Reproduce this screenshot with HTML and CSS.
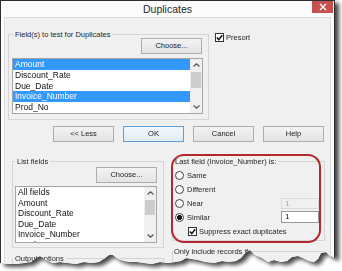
FILE: index.html
```html
<!DOCTYPE html>
<html lang="en">
<head>
    <meta charset="UTF-8">
    <title>Duplicates</title>
    <link rel="stylesheet" href="styles.css">
</head>
<body>
    <div class="shot">
        <div class="dialog">
            <div class="titlebar">
                <span></span>
                <div class="title">Duplicates</div>
                <div class="close">
                    <svg width="8" height="8" viewBox="0 0 8 8"><path d="M1 1L7 7M7 1L1 7" stroke="#fff" stroke-width="1.4"/></svg>
                </div>
            </div>

            <div class="client">
                <div class="row-top">
                    <fieldset class="group g-fields">
                        <legend>Field(s) to test for Duplicates</legend>
                        <div class="btn-line"><button class="btn">Choose...</button></div>
                        <div class="listbox lb-fields">
                            <ul class="items">
                                <li class="sel">Amount</li>
                                <li>Discount_Rate</li>
                                <li>Due_Date</li>
                                <li class="sel">Invoice_Number</li>
                                <li>Prod_No</li>
                            </ul>
                            <div class="sb">
                                <div class="sb-arrow"><svg width="7" height="4" viewBox="0 0 7 4"><path d="M0.5 3.5L3.5 0.8L6.5 3.5" fill="none" stroke="#555" stroke-width="1.2"/></svg></div>
                                <div class="sb-thumb"></div>
                                <div class="sb-track"></div>
                                <div class="sb-arrow"><svg width="7" height="4" viewBox="0 0 7 4"><path d="M0.5 0.5L3.5 3.2L6.5 0.5" fill="none" stroke="#555" stroke-width="1.2"/></svg></div>
                            </div>
                        </div>
                    </fieldset>

                    <div class="check presort">
                        <span class="box"><svg width="7" height="7" viewBox="0 0 7 7"><path d="M0.8 3.6L2.7 5.6L6.3 1.2" fill="none" stroke="#111" stroke-width="1.5"/></svg></span>
                        <span>Presort</span>
                    </div>
                </div>

                <div class="actions">
                    <button class="btn">&lt;&lt; Less</button>
                    <button class="btn default">OK</button>
                    <button class="btn">Cancel</button>
                    <button class="btn">Help</button>
                </div>

                <div class="row-bottom">
                    <div class="col col-left">
                        <fieldset class="group g-list">
                            <legend>List fields</legend>
                            <div class="btn-line"><button class="btn">Choose...</button></div>
                            <div class="listbox lb-list">
                                <ul class="items">
                                    <li>All fields</li>
                                    <li>Amount</li>
                                    <li>Discount_Rate</li>
                                    <li>Due_Date</li>
                                    <li>Invoice_Number</li>
                                    <li>Prod_No</li>
                                </ul>
                                <div class="sb">
                                    <div class="sb-arrow"><svg width="7" height="4" viewBox="0 0 7 4"><path d="M0.5 3.5L3.5 0.8L6.5 3.5" fill="none" stroke="#555" stroke-width="1.2"/></svg></div>
                                    <div class="sb-thumb"></div>
                                    <div class="sb-track"></div>
                                    <div class="sb-arrow"><svg width="7" height="4" viewBox="0 0 7 4"><path d="M0.5 0.5L3.5 3.2L6.5 0.5" fill="none" stroke="#555" stroke-width="1.2"/></svg></div>
                                </div>
                            </div>
                        </fieldset>
                        <fieldset class="group g-output">
                            <legend>Output options</legend>
                        </fieldset>
                    </div>

                    <div class="col col-right">
                        <fieldset class="group g-last">
                            <legend>Last field (Invoice_Number) is:</legend>
                            <div class="opts">
                                <div class="opt"><span class="radio"></span><span>Same</span></div>
                                <div class="opt"><span class="radio"></span><span>Different</span></div>
                                <div class="opt"><span class="radio"></span><span>Near</span><span class="field disabled">1</span></div>
                                <div class="opt"><span class="radio on"></span><span>Similar</span><span class="field">1</span></div>
                                <div class="check suppress">
                                    <span class="box"><svg width="7" height="7" viewBox="0 0 7 7"><path d="M0.8 3.6L2.7 5.6L6.3 1.2" fill="none" stroke="#111" stroke-width="1.5"/></svg></span>
                                    <span>Suppress exact duplicates</span>
                                </div>
                            </div>
                        </fieldset>
                        <fieldset class="group g-only">
                            <legend>Only include records if</legend>
                        </fieldset>
                    </div>

                    <!-- red annotation ring drawn over the "Last field" group -->
                    <div class="callout"></div>
                </div>
            </div>
        </div>
    </div>
</body>
</html>
```

FILE: styles.css
```css
* {
    margin: 0;
    padding: 0;
    box-sizing: border-box;
}

body {
    width: 342px;
    height: 271px;
    overflow: hidden;
    background: #fff;
    font-family: "Liberation Sans", Arial, sans-serif;
    font-size: 7.5px;
    color: #262626;
}

.shot {
    width: 342px;
    height: 271px;
    filter: drop-shadow(4px 3px 2px rgba(0, 0, 0, 0.72));
}

.dialog {
    width: 335px;
    height: 271px;
    display: flex;
    flex-direction: column;
    padding: 0 3px;
    background: #fbfbfb;
    border: 1px solid #2e2e2e;
    border-bottom: none;
    clip-path: polygon(0 0, 335px 0, 335px 258px, 330px 256px, 326px 252px, 321px 253px, 318px 259px, 314px 262px, 309px 261px, 303px 258px, 298px 256px, 292px 257px, 287px 261px, 281px 262px, 274px 260px, 268px 262px, 262px 258px, 255px 255px, 250px 250px, 246px 252px, 241px 258px, 236px 261px, 229px 262px, 222px 261px, 214px 263px, 206px 262px, 198px 260px, 192px 259px, 186px 258px, 181px 261px, 175px 262px, 168px 263px, 160px 262px, 152px 264px, 144px 263px, 137px 262px, 130px 262px, 124px 261px, 118px 259px, 113px 255px, 109px 255px, 105px 258px, 99px 262px, 92px 263px, 84px 262px, 76px 264px, 68px 263px, 60px 262px, 53px 263px, 46px 260px, 40px 256px, 36px 258px, 31px 262px, 24px 263px, 16px 264px, 8px 264px, 0 263px);
}

/* title bar */

.titlebar {
    height: 16px;
    display: grid;
    grid-template-columns: 1fr auto 1fr;
    align-items: start;
}

.title {
    font-size: 10.5px;
    line-height: 17px;
    color: #2a2a2a;
}

.close {
    justify-self: end;
    width: 21px;
    height: 12px;
    margin-right: -2px;
    background: #c75050;
    display: flex;
    align-items: center;
    justify-content: center;
}

/* client area */

.client {
    flex: 1;
    background: #f0f0f0;
    border: 1px solid #dcdcdc;
    padding: 12px 0 0 3px;
}

.group {
    border: 1px solid #d5d5d5;
    min-width: 0;
}

.group legend {
    line-height: 9px;
    padding: 0 2px;
}

.row-top {
    display: flex;
    align-items: flex-start;
}

.g-fields {
    width: 201px;
    padding: 0 5px 5px 3px;
}

.g-fields legend {
    margin-left: 1px;
}

.btn-line {
    display: flex;
    justify-content: flex-end;
}

.g-fields .btn-line {
    margin-top: -1px;
    padding-right: 1px;
}

.btn {
    width: 61px;
    height: 16px;
    border: 1px solid #adadad;
    background: linear-gradient(#f3f3f3, #e4e4e4);
    font-family: inherit;
    font-size: 7.5px;
    color: #222;
    line-height: 14px;
}

.btn.default {
    border-color: #5e9fd8;
    background: linear-gradient(#f2f7fc, #e2ecf6);
}

/* list boxes */

.listbox {
    display: flex;
    background: #fff;
    border: 1px solid #a5a5a5;
    overflow: hidden;
}

.lb-fields {
    height: 56px;
    margin-top: 4px;
}

.lb-list {
    height: 57px;
    margin-top: 3px;
}

.items {
    flex: 1;
    list-style: none;
    font-size: 8.5px;
    color: #111;
}

.lb-fields .items {
    line-height: 10.8px;
}

.lb-list .items {
    line-height: 10.5px;
}

.items li {
    padding-left: 2px;
    white-space: nowrap;
}

.items li.sel {
    background: #3399ff;
    color: #fff;
}

.sb {
    width: 12px;
    display: flex;
    flex-direction: column;
    align-items: center;
    background: #f0f0f0;
}

.sb-arrow {
    height: 12px;
    display: flex;
    align-items: center;
    justify-content: center;
}

.sb-thumb {
    width: 10px;
    height: 16px;
    margin-top: 1px;
    background: #cdcdcd;
}

.lb-list .sb-thumb {
    height: 15px;
    margin-top: 1px;
}

.sb-track {
    flex: 1;
}

/* check boxes and radios */

.check {
    display: flex;
    align-items: center;
    gap: 2px;
}

.box {
    width: 9px;
    height: 9px;
    border: 1px solid #333;
    background: #fff;
    display: flex;
    align-items: center;
    justify-content: center;
}

.presort {
    margin: 3px 0 0 6px;
}

.actions {
    display: flex;
    gap: 9px;
    margin: 6px 0 0 45px;
}

.row-bottom {
    position: relative;
    display: flex;
    align-items: flex-start;
    margin-top: 15px;
}

.col {
    display: flex;
    flex-direction: column;
}

.col-left {
    width: 152px;
    margin-left: 4px;
}

.g-list {
    padding: 0 6px 4px 2px;
}

.g-list .btn-line {
    margin-top: 1px;
}

.g-output {
    margin-top: 6px;
    min-height: 24px;
}

.col-right {
    width: 153px;
    margin-left: 8px;
}

.g-last {
    padding: 0 5px 2px 2px;
}

.g-last legend {
    padding: 0 2px 0 0;
}

.opts {
    padding-top: 2px;
}

.opt {
    height: 14px;
    display: flex;
    align-items: center;
    gap: 3px;
}

.radio {
    width: 9px;
    height: 9px;
    border-radius: 50%;
    border: 1px solid #3d3d3d;
    background: #fff;
}

.radio.on {
    background: radial-gradient(circle, #111 0 2.2px, #fff 2.6px);
}

.field {
    margin-left: auto;
    width: 38px;
    height: 12px;
    padding-left: 3px;
    border: 1px solid #9a9a9a;
    background: #fff;
    font-size: 8px;
    line-height: 10px;
    color: #111;
}

.field.disabled {
    height: 11px;
    border-color: #dadada;
    background: #f0f0f0;
    color: #a0a0a0;
}

.suppress {
    height: 14px;
    margin-left: 13px;
}

.g-only {
    margin-top: 6px;
    min-height: 24px;
}

.g-only legend {
    padding: 0 2px 0 1px;
}

.callout {
    position: absolute;
    left: 163px;
    top: -3px;
    width: 150px;
    height: 89px;
    border: 2px solid #b3282d;
    border-radius: 13px;
}
```
